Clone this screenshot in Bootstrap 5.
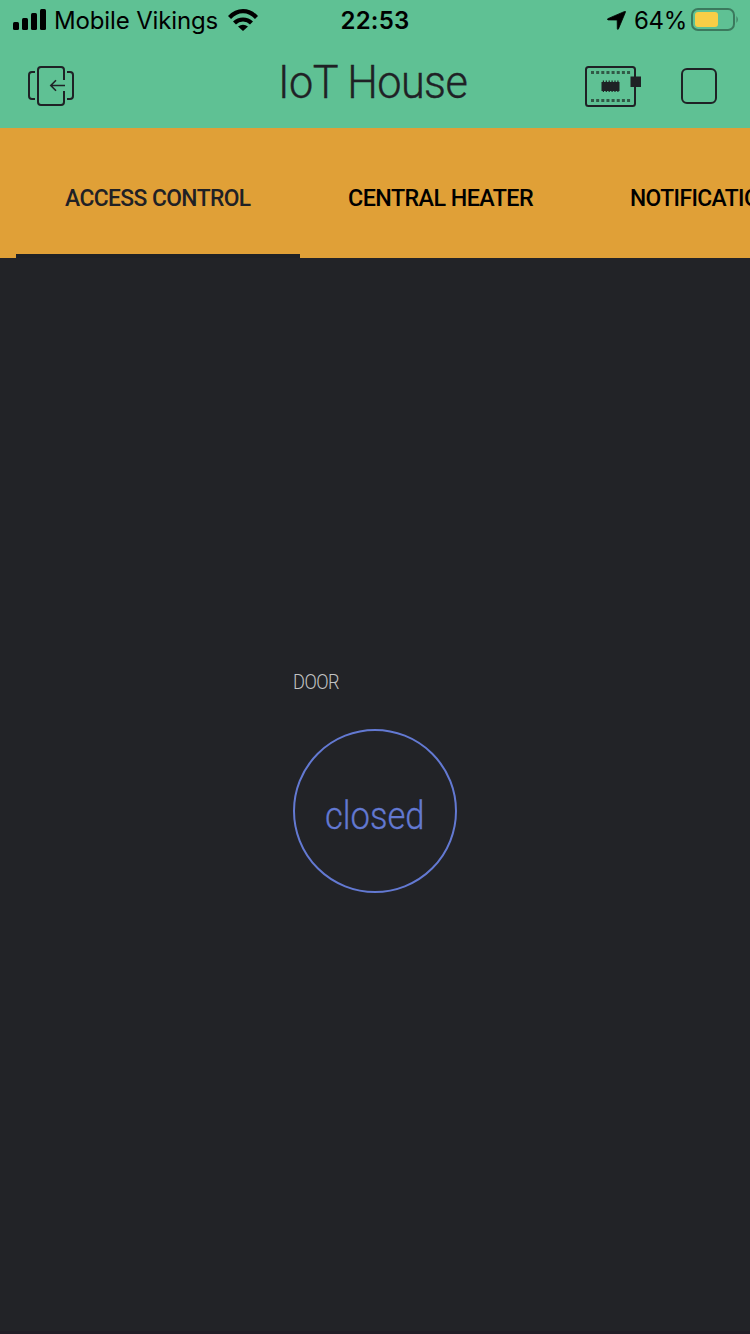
<!DOCTYPE html>
<html lang="en">
<head>
<meta charset="utf-8">
<meta name="viewport" content="width=device-width, initial-scale=1">
<title>IoT House</title>
<link href="https://cdn.jsdelivr.net/npm/bootstrap@5.3.0/dist/css/bootstrap.min.css" rel="stylesheet">
<style>
  :root { --ink: #1f2125; --green: #5fc194; --amber: #e0a037; --blue: #6379d2; }
  body { background: #222327; font-family: Roboto, "Liberation Sans", sans-serif; height: 1334px; }
  svg { display: block; flex: none; }
  .app-top { background: var(--green); height: 128px; }
  .status-bar { height: 40px; font: 400 24px/38px Inter, "Liberation Sans", sans-serif; color: #000; padding-left: 13px; padding-right: 11px; }
  .status-bar span { padding-top: 2px; }
  .status-side { flex: 1 1 0; }
  .carrier { margin-left: 8px; margin-right: 10px; letter-spacing: -.14px; }
  .clock { font-weight: 600; letter-spacing: .2px; margin-left: -2px; }
  .battery-text { margin-left: 8px; margin-right: 4px; letter-spacing: -.3px; }
  .title-bar { height: 88px; padding-left: 28px; padding-right: 33px; }
  .app-title { font-size: 46.5px; font-weight: 300; line-height: 84px; color: var(--ink); transform: scaleX(.93); letter-spacing: -.6px; -webkit-text-stroke: .4px var(--ink); }
  .tool { background: none; line-height: 0; }
  .tab-strip { background: var(--amber); height: 130px; padding-left: 16px; overflow: hidden; }
  .tab-strip .nav-link { width: 282px; flex: none; border-radius: 0; padding: 14px 0 0 48px; color: #000; font-size: 24px; font-weight: 500; border-bottom: 4px solid transparent; white-space: nowrap; }
  .tab-strip .nav-link.active { width: 284px; padding-left: 49px; color: var(--ink); border-color: var(--ink); }
  .tab-strip .nav-link span { transform: scaleX(.95); transform-origin: left; letter-spacing: -.6px; }
  .tab-strip .nav-link:nth-child(2) span { transform: scaleX(.972); }
  .canvas-area { height: 1076px; padding-top: 411px; border-bottom: 3px solid #211d26; }
  .door-widget { width: 164px; }
  .door-label { height: 26px; font-size: 20px; line-height: 27px; font-weight: 300; color: #c2c3c5; letter-spacing: -.6px; transform: scaleX(.91); transform-origin: left; }
  .door-state { width: 164px; height: 164px; margin-top: 34px; border: 2px solid var(--blue); color: var(--blue); background: none; font-size: 38px; font-weight: 300; line-height: 1; padding: 9px 0 0; }
  .door-state span { transform: scaleX(.91); -webkit-text-stroke: .3px var(--blue); }
</style>
</head>
<body class="m-0 overflow-hidden">
<header class="app-top">
  <div class="status-bar d-flex align-items-center">
    <div class="status-side d-flex align-items-center">
      <svg width="33" height="22" viewBox="0 0 33 22"><rect y="13" width="6" height="8" rx="1.5"/><rect x="9" y="9" width="6" height="12" rx="1.5"/><rect x="18" y="4" width="6" height="17" rx="1.5"/><rect x="27" y="0" width="6" height="21" rx="1.5"/></svg>
      <span class="carrier">Mobile Vikings</span>
      <svg width="30" height="22" viewBox="0 0 30 22"><g fill="none" stroke="#000" stroke-width="4.200"><path d="M1.500 8.500Q7.500 2.200 15 2.200T28.500 8.500"/><path d="M6.500 14Q10 10.500 15 10.500T23.500 14"/></g><path d="M10 17.500Q15 13.800 20 17.500L15 22Z"/></svg>
    </div>
    <span class="clock">22:53</span>
    <div class="status-side d-flex align-items-center justify-content-end">
      <svg width="19" height="19" viewBox="0 0 19 19"><path d="M17.700.4Q18.800.1 18.400 1.300L11.400 18Q10.600 19 10.300 17.700L10.200 9.600Q10.200 9 9.600 9L1 8.900Q-.2 8.500.8 7.700Z" stroke="#000" stroke-width=".8"/></svg>
      <span class="battery-text">64%</span>
      <svg width="48" height="24" viewBox="0 0 48 24"><rect x="1" y="1" width="42" height="21" rx="6" fill="none" stroke="#3b795d" stroke-width="2"/><rect x="4" y="4" width="23" height="15" rx="3" fill="#f8ce46"/><path d="M45.500 8Q48 11.500 45.500 15Z" fill="#3b795d"/></svg>
    </div>
  </div>
  <div class="title-bar d-flex align-items-start">
    <div class="status-side d-flex align-items-start">
      <button class="tool border-0 p-0" style="margin-top:26px" aria-label="Exit">
        <svg width="46" height="40" viewBox="0 0 46 40" fill="none" stroke="#1f2125" stroke-width="2"><path d="M7 6H4Q1 6 1 9V30Q1 33 4 33H7M39 6H42Q45 6 45 9V30Q45 33 42 33H39"/><path d="M36 14V4Q36 1 33 1H13Q10 1 10 4V36Q10 39 13 39H33Q36 39 36 36V25"/><path d="M37 19.500H23M28 14.300L22.800 19.500L28 24.700" stroke-width="1.600"/></svg>
      </button>
    </div>
    <h1 class="app-title m-0">IoT House</h1>
    <div class="status-side d-flex align-items-start justify-content-end">
      <button class="tool border-0 p-0" style="margin-top:26px" aria-label="Devices">
        <svg width="57" height="41" viewBox="0 0 57 41"><rect x="1" y="1" width="49" height="39" rx="2.500" fill="none" stroke="#1f2125" stroke-width="2"/><path d="M6 6.500H46M6 34.500H46" stroke="#315846" stroke-width="3" stroke-dasharray="3 2.150"/><path d="M17.800 15.300H34M17.800 25.200H34" stroke="#1f2125" stroke-width="1.500" stroke-dasharray="1.200 1.700"/><rect x="16.500" y="16" width="18" height="9" fill="#1f2125"/><rect x="45.500" y="10.500" width="10.500" height="10.500" fill="#1f2125"/></svg>
      </button>
      <button class="tool border-0 p-0" style="margin:28px 0 0 39px" aria-label="Stop">
        <svg width="36" height="36" viewBox="0 0 36 36"><rect x="1" y="1" width="34" height="34" rx="5" fill="none" stroke="#1f2125" stroke-width="2"/></svg>
      </button>
    </div>
  </div>
</header>
<nav class="tab-strip nav flex-nowrap">
  <a class="nav-link active d-flex align-items-center" href="#"><span>ACCESS CONTROL</span></a>
  <a class="nav-link d-flex align-items-center" href="#"><span>CENTRAL HEATER</span></a>
  <a class="nav-link d-flex align-items-center" href="#"><span>NOTIFICATIONS</span></a>
</nav>
<main class="canvas-area d-flex justify-content-center">
  <section class="door-widget">
    <div class="door-label">DOOR</div>
    <button class="door-state rounded-circle d-flex align-items-center justify-content-center"><span>closed</span></button>
  </section>
</main>
<script src="https://cdn.jsdelivr.net/npm/bootstrap@5.3.0/dist/js/bootstrap.bundle.min.js"></script>
</body>
</html>
